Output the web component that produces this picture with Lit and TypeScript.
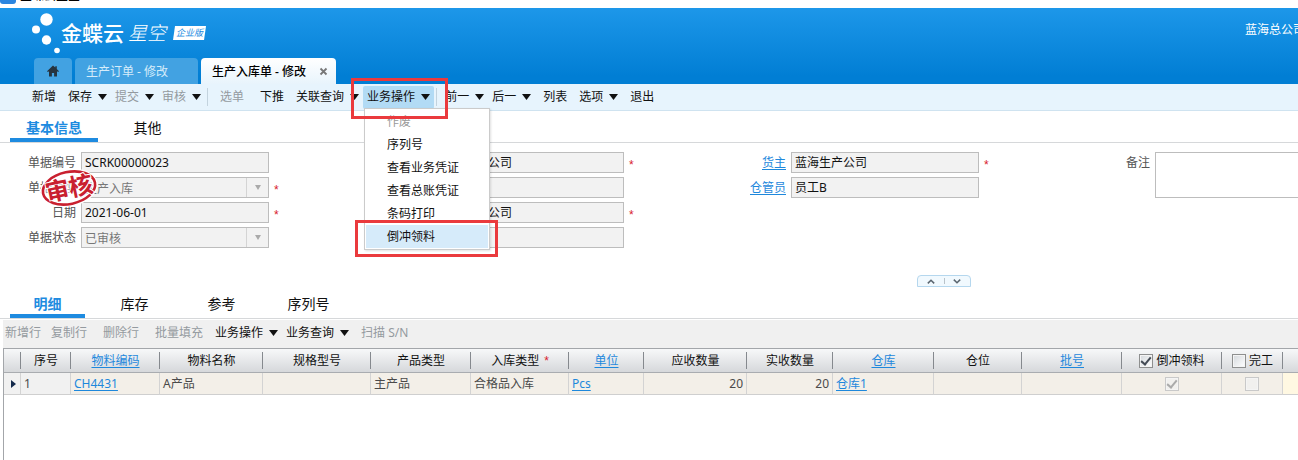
import { LitElement, html, css, nothing } from "lit";
import { customElement, property } from "lit/decorators.js";
import { classMap } from "lit/directives/class-map.js";

const caret = html`<svg class="caret" width="9" height="6" viewBox="0 0 9 6" aria-hidden="true">
  <path d="M0 0h9L4.5 6z" fill="currentColor" />
</svg>`;

interface Field {
  id: string;
  label: string;
  value: string;
  kind?: "input" | "select" | "area";
  link?: boolean;
  required?: boolean;
}

interface Column {
  title: string;
  width?: number;
  value?: string;
  link?: boolean;
  cellLink?: boolean;
  required?: boolean;
  align?: "right";
  check?: boolean;
}

const formColumns: Field[][] = [
  [
    { id: "bill-no", label: "单据编号", value: "SCRK00000023" },
    { id: "bill-type", label: "单据类型", value: "生产入库", kind: "select", required: true },
    { id: "bill-date", label: "日期", value: "2021-06-01", required: true },
    { id: "bill-status", label: "单据状态", value: "已审核", kind: "select" },
  ],
  [
    { id: "stock-org", label: "", value: "蓝海生产公司", required: true },
    { id: "dept", label: "", value: "" },
    { id: "prod-org", label: "", value: "蓝海生产公司", required: true },
    { id: "group", label: "", value: "" },
  ],
  [
    { id: "owner", label: "货主", value: "蓝海生产公司", link: true, required: true },
    { id: "keeper", label: "仓管员", value: "员工B", link: true },
  ],
  [{ id: "remark", label: "备注", value: "", kind: "area" }],
];

const columns: Column[] = [
  { title: "", width: 17 },
  { title: "序号", width: 50, value: "1" },
  { title: "物料编码", width: 89, value: "CH4431", link: true, cellLink: true },
  { title: "物料名称", width: 103, value: "A产品" },
  { title: "规格型号", width: 108 },
  { title: "产品类型", width: 100, value: "主产品" },
  { title: "入库类型", width: 98, value: "合格品入库", required: true },
  { title: "单位", width: 75, value: "Pcs", link: true, cellLink: true },
  { title: "应收数量", width: 103, value: "20", align: "right" },
  { title: "实收数量", width: 86, value: "20", align: "right" },
  { title: "仓库", width: 101, value: "仓库1", link: true, cellLink: true },
  { title: "仓位", width: 88 },
  { title: "批号", width: 100, link: true },
  { title: "倒冲领料", width: 100, value: "1", check: true },
  { title: "完工", width: 61, value: "", check: true },
  { title: "" },
];

const base = css`
  * {
    box-sizing: border-box;
  }
  button,
  input,
  select,
  textarea {
    font: inherit;
    color: inherit;
    margin: 0;
    padding: 0;
    border: 0;
    background: none;
    border-radius: 0;
    outline: none;
  }
  button {
    white-space: nowrap;
  }
  a {
    color: #1e88dc;
    text-underline-offset: 2px;
  }
`;

@customElement("tool-button")
class ToolButton extends LitElement {
  @property() label = "";
  @property({ type: Boolean }) menu = false;
  @property({ type: Boolean }) off = false;
  @property({ type: Boolean }) hot = false;

  static styles = [
    base,
    css`
      :host {
        display: flex;
      }
      .btn {
        display: flex;
        align-items: center;
        gap: 6px;
        height: 23px;
        line-height: 20px;
        color: #111;
      }
      .plain {
        padding: 0 4px;
      }
      .off .text {
        color: #949a9f;
      }
      .hot {
        padding: 0 4px;
        margin: 0 -4px;
        border-radius: 2px;
        background: #b2dbf5;
      }
    `,
  ];

  render() {
    return html`<button
      type="button"
      class=${classMap({ btn: true, plain: !this.menu, off: this.off, hot: this.hot })}
    >
      <span class="text">${this.label}</span>${this.menu ? caret : nothing}
    </button>`;
  }
}

@customElement("app-header")
class AppHeader extends LitElement {
  static styles = [
    base,
    css`
      :host {
        display: block;
      }
      .title {
        height: 8px;
        overflow: hidden;
        display: flex;
        align-items: flex-end;
        gap: 4px;
        padding-bottom: 4px;
        background: #fff;
        color: #000;
        font-weight: 500;
        line-height: 16px;
      }
      .title-icon {
        width: 16px;
        height: 16px;
        border-radius: 3px;
        background: #2b86e0;
      }
      .band {
        height: 76px;
        display: flex;
        flex-direction: column;
        justify-content: space-between;
        background: linear-gradient(#1d97e9, #017ed4 90%);
        color: #fff;
      }
      .top {
        display: flex;
        justify-content: space-between;
        padding-left: 30px;
      }
      .brand {
        display: flex;
        align-items: center;
        height: 50px;
      }
      .dots {
        flex: none;
      }
      .name {
        font-size: 21px;
        line-height: 24px;
        font-weight: 500;
      }
      .sub {
        font-size: 19px;
        line-height: 24px;
        font-weight: 300;
        font-style: italic;
        margin-left: 4px;
      }
      .edition {
        margin-left: 7px;
        width: 33px;
        height: 14px;
        font-size: 9px;
        line-height: 14px;
        font-style: italic;
        text-align: center;
        color: #1a8bdf;
        background: #fff;
        clip-path: polygon(2px 0, 100% 0, 31px 100%, 0 100%);
      }
      .org {
        width: 53px;
        overflow: hidden;
        white-space: nowrap;
        line-height: 20px;
        padding-top: 12px;
      }
      .tabs {
        display: flex;
        gap: 3px;
        padding-left: 34px;
      }
      .tab {
        height: 26px;
        display: flex;
        align-items: center;
        padding: 0 11px;
        border-radius: 4px 4px 0 0;
        background: #42a2e2;
        color: #d5ecfa;
      }
      .home {
        width: 38px;
        justify-content: center;
      }
      .idle {
        width: 123px;
      }
      .active {
        width: 135px;
        justify-content: space-between;
        padding-right: 8px;
        background: linear-gradient(#fff, #e8f4fc);
        color: #000;
        font-weight: 500;
      }
    `,
  ];

  render() {
    return html`
      <div class="title"><span class="title-icon"></span><span>金蝶云星空</span></div>
      <header class="band">
        <div class="top">
          <div class="brand">
            <svg class="dots" width="31" height="46" viewBox="0 0 31 46" aria-hidden="true">
              <g fill="#fff">
                <circle cx="16.5" cy="9.5" r="6.2" />
                <circle cx="6" cy="19.5" r="4" />
                <circle cx="16.5" cy="30" r="4.7" />
                <circle cx="27" cy="40.5" r="2.8" />
              </g>
            </svg>
            <span class="name">金蝶云</span><span class="sub">星空</span>
            <span class="edition">企业版</span>
          </div>
          <div class="org">蓝海总公司</div>
        </div>
        <nav class="tabs">
          <button type="button" class="tab home" aria-label="首页">
            <svg width="12" height="12" viewBox="0 0 12 12" aria-hidden="true">
              <path
                d="M6 .5L0 6.2l.9.9L2 6.2V11.5h2.9V8h2.2v3.5H10V6.2l1.1.9.9-.9L9.8 4V1.2H8.3v1.4z"
                fill="#26333f"
              />
            </svg>
          </button>
          <button type="button" class="tab idle">生产订单 - 修改</button>
          <button type="button" class="tab active">
            <span>生产入库单 - 修改</span>
            <svg width="9" height="9" viewBox="0 0 9 9" aria-hidden="true">
              <path d="M1.5 1.5l6 6M7.5 1.5l-6 6" stroke="#777" stroke-width="1.8" />
            </svg>
          </button>
        </nav>
      </header>
    `;
  }
}

@customElement("main-toolbar")
class MainToolbar extends LitElement {
  static styles = [
    base,
    css`
      :host {
        display: block;
      }
      .bar {
        display: flex;
        align-items: center;
        gap: 8px;
        height: 27px;
        padding-left: 28px;
        background: #e7f4fd;
        border-bottom: 1px solid #cfe3f0;
      }
      .sep {
        width: 1px;
        height: 18px;
        margin-left: -2px;
        background: #c3d3de;
      }
      .anchor {
        position: relative;
        z-index: 5;
      }
      .menu {
        position: absolute;
        top: 22px;
        left: -3px;
        width: 126px;
        margin: 0;
        padding: 1px;
        list-style: none;
        background: #fff;
        border: 1px solid #cbcbcb;
        box-shadow: 1px 1px 2px rgba(0, 0, 0, 0.12);
      }
      .item {
        display: block;
        width: 100%;
        height: 23px;
        line-height: 23px;
        padding-left: 21px;
        text-align: left;
        color: #111;
      }
      .item.off {
        color: #999;
      }
      .item.on {
        background: #d6ebfa;
      }
      .mark {
        position: absolute;
        border: 3px solid #ea3a3d;
        pointer-events: none;
      }
      .mark-button {
        top: -8px;
        left: -16px;
        width: 97px;
        height: 41px;
      }
      .mark-item {
        top: 134px;
        left: -12px;
        width: 143px;
        height: 37px;
      }
    `,
  ];

  render() {
    const items = ["作废", "序列号", "查看业务凭证", "查看总账凭证", "条码打印", "倒冲领料"];
    return html`<div class="bar">
      <tool-button label="新增"></tool-button>
      <tool-button label="保存" menu></tool-button>
      <tool-button label="提交" menu off></tool-button>
      <tool-button label="审核" menu off></tool-button>
      <span class="sep"></span>
      <tool-button label="选单" off></tool-button>
      <tool-button label="下推"></tool-button>
      <tool-button label="关联查询" menu></tool-button>
      <div class="anchor">
        <tool-button label="业务操作" menu hot></tool-button>
        <ul class="menu">
          ${items.map(
            (t, i) => html`<li>
              <button
                type="button"
                class=${classMap({ item: true, off: i === 0, on: i === items.length - 1 })}
              >
                ${t}
              </button>
            </li>`
          )}
        </ul>
        <span class="mark mark-button"></span>
        <span class="mark mark-item"></span>
      </div>
      <span class="sep"></span>
      <tool-button label="前一" menu></tool-button>
      <tool-button label="后一" menu></tool-button>
      <tool-button label="列表"></tool-button>
      <tool-button label="选项" menu></tool-button>
      <tool-button label="退出"></tool-button>
    </div>`;
  }
}

@customElement("section-tabs")
class SectionTabs extends LitElement {
  @property({ attribute: false }) tabs: string[] = [];

  static styles = [
    base,
    css`
      :host {
        display: block;
      }
      .strip {
        display: flex;
        gap: 12px;
        height: 32px;
        padding-left: 10px;
        border-bottom: 1px solid #d6d8da;
      }
      .tab {
        min-width: 75px;
        height: 31px;
        padding: 7px 16px 0;
        font-size: 14px;
        line-height: 20px;
        border-bottom: 4px solid transparent;
        color: #111;
      }
      .tab.on {
        color: #1e8be0;
        border-color: #1e8be0;
        font-weight: 700;
      }
    `,
  ];

  render() {
    return html`<nav class="strip">
      ${this.tabs.map(
        (t, i) => html`<button type="button" class=${classMap({ tab: true, on: i === 0 })}>${t}</button>`
      )}
    </nav>`;
  }
}

@customElement("bill-form")
class BillForm extends LitElement {
  static styles = [
    base,
    css`
      :host {
        display: block;
      }
      .form {
        position: relative;
        display: grid;
        grid-template-columns: repeat(3, 355px) minmax(200px, 1fr);
        min-height: 132px;
        padding-top: 9px;
      }
      .col {
        display: flex;
        flex-direction: column;
        gap: 4px;
      }
      .row {
        display: flex;
        align-items: flex-start;
        gap: 5px;
        line-height: 21px;
      }
      .label {
        width: 76px;
        flex: none;
        text-align: right;
        color: #555;
      }
      .wide .label {
        width: 85px;
      }
      .field {
        width: 188px;
        height: 21px;
        padding: 0 3px;
        border: 1px solid #bdbdbd;
        background: #f2f2f2;
        color: #111;
      }
      .pick {
        position: relative;
        display: flex;
        color: #aaa;
      }
      select.field {
        appearance: none;
        opacity: 1;
        color: #777;
      }
      .pick-mark {
        position: absolute;
        top: 1px;
        right: 1px;
        width: 22px;
        height: 19px;
        display: grid;
        place-items: center;
        border-left: 1px solid #d4d4d4;
        pointer-events: none;
      }
      .area {
        flex: 1;
        height: 46px;
        border: 1px solid #bdbdbd;
        border-right: 0;
        resize: none;
        background: #fff;
      }
      .star {
        color: #d8202c;
        font-family: "Liberation Sans", sans-serif;
        height: 21px;
        line-height: 26px;
      }
      .stamp {
        position: absolute;
        top: 23px;
        left: 39px;
      }
      .stamp-text {
        font-family: "Noto Sans CJK SC", sans-serif;
        font-size: 24px;
        font-weight: 700;
      }
      .fold {
        display: flex;
        justify-content: flex-end;
        padding-right: 327px;
      }
      .handle {
        display: flex;
        align-items: center;
        width: 54px;
        height: 12px;
        border: 1px solid #b5d7ee;
        border-radius: 4px 4px 0 0;
        background: #f1f9fe;
      }
      .fold-btn {
        flex: 1;
        display: grid;
        place-items: center;
        height: 10px;
      }
      .fold-btn + .fold-btn {
        background: linear-gradient(#b9c3ca, #b9c3ca) left center / 1px 6px no-repeat;
      }
    `,
  ];

  control(f: Field) {
    if (f.kind === "select") {
      return html`<span class="pick">
        <select id=${f.id} class="field" disabled><option>${f.value}</option></select>
        <span class="pick-mark"
          ><svg width="6" height="5" viewBox="0 0 6 5" aria-hidden="true">
            <path d="M0 0h6L3 5z" fill="#aaa" /></svg
        ></span>
      </span>`;
    }
    if (f.kind === "area") return html`<textarea id=${f.id} class="area"></textarea>`;
    return html`<input
      id=${f.id}
      class="field"
      type="text"
      readonly
      aria-label=${f.label || f.id}
      .value=${f.value}
    />`;
  }

  render() {
    return html`
      <div class="form">
        ${formColumns.map(
          (col) => html`<div class="col">
            ${col.map(
              (f) => html`<div class=${classMap({ row: true, wide: f.kind === "area" })}>
                <label class="label" for=${f.id}
                  >${f.link ? html`<a href="#">${f.label}</a>` : f.label}</label
                >
                ${this.control(f)} ${f.required ? html`<span class="star">*</span>` : nothing}
              </div>`
            )}
          </div>`
        )}
        <svg class="stamp" width="60" height="44" viewBox="0 0 60 44" aria-hidden="true">
          <g transform="rotate(-12 30 22)">
            <ellipse cx="30" cy="22" rx="26.5" ry="16" fill="none" stroke="#fff" stroke-width="5" />
            <ellipse cx="30" cy="22" rx="26.5" ry="16" fill="#fff" fill-opacity=".4" stroke="#c9202f" stroke-width="2.6" />
            <text
              class="stamp-text"
              x="30"
              y="31"
              text-anchor="middle"
              fill="#c9202f"
              stroke="#fff"
              stroke-width="2"
              paint-order="stroke"
            >
              审核
            </text>
          </g>
        </svg>
      </div>
      <div class="fold">
        <div class="handle">
          <button type="button" class="fold-btn" aria-label="收起">
            <svg width="8" height="5" viewBox="0 0 8 5" aria-hidden="true">
              <path d="M.8 4.4L4 1.2l3.2 3.2" fill="none" stroke="#5b6670" stroke-width="1.5" />
            </svg>
          </button>
          <button type="button" class="fold-btn" aria-label="展开">
            <svg width="8" height="5" viewBox="0 0 8 5" aria-hidden="true">
              <path d="M.8.6L4 3.8 7.2.6" fill="none" stroke="#5b6670" stroke-width="1.5" />
            </svg>
          </button>
        </div>
      </div>
    `;
  }
}

@customElement("entry-grid")
class EntryGrid extends LitElement {
  static styles = [
    base,
    css`
      :host {
        display: flex;
        flex-direction: column;
        flex: 1;
        padding: 1px 0 0 3px;
      }
      .bar {
        display: flex;
        align-items: center;
        gap: 8px;
        height: 28px;
        padding-bottom: 3px;
        background: #f0f0f0;
      }
      .pair {
        display: flex;
        gap: 2px;
        margin-left: -2px;
      }
      .body {
        flex: 1;
        overflow: hidden;
        border-left: 1px solid #a3a6aa;
        border-top: 1px solid #a3a6aa;
      }
      .grid {
        width: 100%;
        table-layout: fixed;
        border-collapse: separate;
        border-spacing: 0;
      }
      .th {
        height: 24px;
        padding: 0;
        font-weight: 400;
        line-height: 20px;
        text-align: center;
        white-space: nowrap;
        color: #111;
        border-bottom: 1px solid #a9acb0;
        background:
          linear-gradient(#85898e, #85898e) right 3px / 1px 17px no-repeat,
          linear-gradient(#f7f8f9, #d6d8db);
      }
      .th:last-child {
        background: linear-gradient(#f7f8f9, #d6d8db);
      }
      .td {
        height: 22px;
        padding: 0 3px;
        line-height: 20px;
        white-space: nowrap;
        color: #4a4a4a;
        background: #f3efe8;
        border-right: 1px solid #d3d3d3;
        border-bottom: 1px solid #cfcfcf;
      }
      .td.head {
        background: #f1f1f1;
      }
      .td.tail {
        background: #fff8e2;
        border-right: 0;
      }
      .td.right {
        text-align: right;
      }
      .td.center {
        text-align: center;
      }
      .star {
        color: #d8202c;
        font-family: "Liberation Sans", sans-serif;
        margin-left: 5px;
      }
      .pointer {
        display: block;
        margin-left: 4px;
      }
      .check {
        display: inline-flex;
        align-items: center;
        gap: 3px;
        vertical-align: top;
        height: 20px;
      }
      .box {
        appearance: none;
        width: 14px;
        height: 14px;
        display: grid;
        place-items: center;
        border: 1px solid #8e8f8f;
        background: linear-gradient(135deg, #d4d8dc, #fff);
        box-shadow: inset 0 0 0 1px #f4f4f4;
      }
      .box:checked::before {
        content: "";
        width: 4px;
        height: 8px;
        margin-bottom: 2px;
        border: solid #444b55;
        border-width: 0 2px 2px 0;
        transform: rotate(40deg);
      }
      .box:disabled {
        border-color: #c9c9c9;
        background: #f1f0ee;
      }
      .box:disabled::before {
        border-color: #aaa;
      }
    `,
  ];

  headCell(c: Column) {
    if (c.check) {
      return html`<label class="check"
        ><input type="checkbox" class="box" .checked=${c.value === "1"} />${c.title}</label
      >`;
    }
    if (c.link) return html`<a href="#">${c.title}</a>`;
    return html`${c.title}${c.required ? html`<span class="star">*</span>` : nothing}`;
  }

  bodyCell(c: Column, i: number) {
    if (i === 0) {
      return html`<svg class="pointer" width="5" height="8" viewBox="0 0 5 8" aria-hidden="true">
        <path d="M0 0l5 4-5 4z" fill="#13294b" />
      </svg>`;
    }
    if (c.check) {
      return html`<span class="check"
        ><input type="checkbox" class="box" disabled aria-label=${c.title} .checked=${c.value === "1"}
      /></span>`;
    }
    if (c.cellLink) return html`<a href="#">${c.value}</a>`;
    return c.value ?? nothing;
  }

  render() {
    return html`
      <div class="bar">
        <div class="pair">
          <tool-button label="新增行" off></tool-button>
          <tool-button label="复制行" off></tool-button>
        </div>
        <tool-button label="删除行" off></tool-button>
        <tool-button label="批量填充" off></tool-button>
        <tool-button label="业务操作" menu></tool-button>
        <tool-button label="业务查询" menu></tool-button>
        <tool-button label="扫描 S/N" off></tool-button>
      </div>
      <div class="body">
        <table class="grid">
          <colgroup>
            ${columns.map((c) => (c.width ? html`<col style="width:${c.width}px" />` : html`<col />`))}
          </colgroup>
          <thead>
            <tr>
              ${columns.map((c) => html`<th class="th" scope="col">${this.headCell(c)}</th>`)}
            </tr>
          </thead>
          <tbody>
            <tr>
              ${columns.map(
                (c, i) => html`<td
                  class=${classMap({
                    td: true,
                    head: i < 2,
                    tail: i === columns.length - 1,
                    right: c.align === "right",
                    center: !!c.check,
                  })}
                >
                  ${this.bodyCell(c, i)}
                </td>`
              )}
            </tr>
          </tbody>
        </table>
      </div>
    `;
  }
}

@customElement("app-root")
class AppRoot extends LitElement {
  static styles = css`
    :host {
      display: flex;
      flex-direction: column;
      min-height: 100vh;
      overflow: hidden;
      background: #fff;
      font-family: "Noto Sans", "Noto Sans CJK SC", sans-serif;
      font-size: 12px;
      color: #111;
    }
  `;

  render() {
    return html`
      <app-header></app-header>
      <main-toolbar></main-toolbar>
      <section-tabs .tabs=${["基本信息", "其他"]}></section-tabs>
      <bill-form></bill-form>
      <section-tabs .tabs=${["明细", "库存", "参考", "序列号"]}></section-tabs>
      <entry-grid></entry-grid>
    `;
  }
}
